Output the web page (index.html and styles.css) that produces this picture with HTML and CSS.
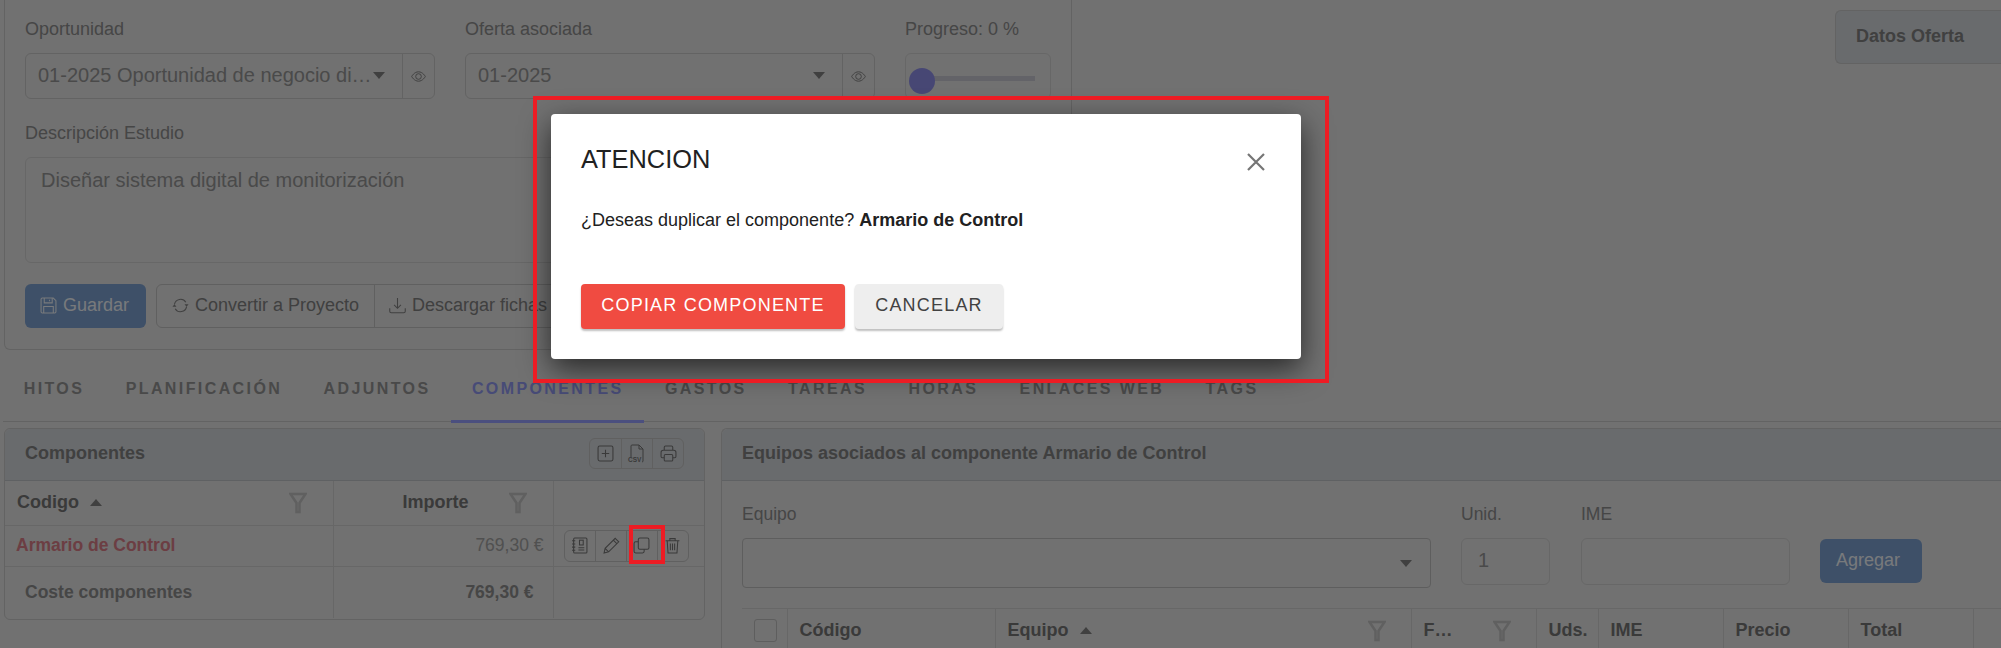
FILE: index.html
```html
<!DOCTYPE html>
<html lang="es">
<head>
    <meta charset="UTF-8">
    <meta name="viewport" content="width=device-width, initial-scale=1.0">
    <title>Estudio - Componentes</title>
    <link rel="stylesheet" href="styles.css">
</head>
<body>
    <svg class="sprites" width="0" height="0" aria-hidden="true">
        <symbol id="i-eye" viewBox="0 0 16 16"><path d="M.7 8S3.4 3 8 3s7.3 5 7.3 5-2.7 5-7.3 5S.7 8 .7 8z"/><circle cx="8" cy="8" r="3"/></symbol>
        <symbol id="i-save" viewBox="0 0 16 16"><path d="M1 2.2C1 1.5 1.5 1 2.2 1h10.3L15 3.5v10.3c0 .7-.5 1.2-1.2 1.2H2.2C1.5 15 1 14.500 1 13.800z"/><path d="M4 1v4.500h7.500V1M9 2.500v1.500M3.500 15V9h9v6"/></symbol>
        <symbol id="i-sync" viewBox="0 0 16 16"><path d="M2.300 7A5.800 5.800 0 0 1 13 5M13.700 9A5.800 5.800 0 0 1 3 11"/><path class="solid" d="M.4 9.200h3.800L2.300 6.900zM11.800 6.800h3.800l-1.900 2.300z"/></symbol>
        <symbol id="i-down" viewBox="0 0 16 16"><path d="M8 1v9.500M4.800 7.500 8 10.700l3.200-3.200M.7 10.500v3c0 .8.600 1.400 1.400 1.400h11.800c.8 0 1.400-.6 1.400-1.400v-3"/></symbol>
        <symbol id="i-plus" viewBox="0 0 16 16"><rect x="1" y="1" width="14" height="14" rx="1.500"/><path d="M8 4.500v7M4.500 8h7"/></symbol>
        <symbol id="i-print" viewBox="0 0 16 16"><path d="M4 5V2.200C4 1.500 4.500 1 5.200 1h5.600c.7 0 1.200.5 1.200 1.200V5M4 12H2.200C1.500 12 1 11.500 1 10.800V7c0-1.100.9-2 2-2h10c1.100 0 2 .9 2 2v3.800c0 .7-.5 1.200-1.200 1.200H12"/><rect x="4" y="9" width="8" height="6" rx="1"/></symbol>
        <symbol id="i-book" viewBox="0 0 16 16"><rect x="2.500" y="1" width="12.500" height="14" rx="1"/><path d="M1 3.500h3M1 6.500h3M1 9.500h3M1 12.500h3M7 12.300h5.500M7 10.200h5.500"/><rect x="8" y="3" width="3.500" height="4.500"/></symbol>
        <symbol id="i-pencil" viewBox="0 0 16 16"><path d="M11.500 1.200 14.800 4.500 5.300 14 1 15l1-4.300zM9.700 3l3.300 3.300M2 10.700 5.300 14"/></symbol>
        <symbol id="i-copy" viewBox="0 0 16 16"><rect x="5" y="1" width="10" height="10.500" rx="1.500"/><path d="M5 4.500H2.500C1.700 4.500 1 5.200 1 6v7.500c0 .8.700 1.500 1.500 1.500h6.500c.8 0 1.500-.7 1.500-1.500v-2"/></symbol>
        <symbol id="i-trash" viewBox="0 0 16 16"><path d="M1.500 3.500h13M5.500 3.500V1.500h5v2M3 3.500l.8 11.500h8.400L13 3.500M6 6v6.500M8 6v6.500M10 6v6.500"/></symbol>
        <symbol id="i-funnel" viewBox="0 0 18 22"><path d="M1.500 2h15L10.500 11v9h-3v-9z"/></symbol>
    </svg>

    <div class="page">
        <div class="top-row">
            <section class="study-card">
                <div class="fields">
                    <div class="field field-wide">
                        <label class="lbl">Oportunidad</label>
                        <div class="select-eye">
                            <div class="select-value">01-2025 Oportunidad de negocio di…<span class="caret"></span></div>
                            <div class="eye-cell"><svg class="ico ico-eye"><use href="#i-eye"/></svg></div>
                        </div>
                    </div>
                    <div class="field field-wide">
                        <label class="lbl">Oferta asociada</label>
                        <div class="select-eye">
                            <div class="select-value select-spread">01-2025<span class="caret"></span></div>
                            <div class="eye-cell"><svg class="ico ico-eye"><use href="#i-eye"/></svg></div>
                        </div>
                    </div>
                    <div class="field field-progress">
                        <label class="lbl">Progreso: 0 %</label>
                        <div class="slider-box">
                            <span class="thumb"></span>
                            <span class="track"></span>
                        </div>
                    </div>
                </div>
                <label class="lbl lbl-desc">Descripción Estudio</label>
                <div class="desc-box">Diseñar sistema digital de monitorización</div>
                <div class="actions">
                    <button class="btn btn-primary"><svg class="ico"><use href="#i-save"/></svg>Guardar</button>
                    <div class="btn-group">
                        <button class="btn"><svg class="ico"><use href="#i-sync"/></svg>Convertir a Proyecto</button>
                        <button class="btn"><svg class="ico"><use href="#i-down"/></svg>Descargar fichas</button>
                    </div>
                </div>
            </section>
            <div class="side-tab">Datos Oferta</div>
        </div>

        <nav class="tabs">
            <a class="tab">HITOS</a>
            <a class="tab">PLANIFICACIÓN</a>
            <a class="tab">ADJUNTOS</a>
            <a class="tab active">COMPONENTES</a>
            <a class="tab">GASTOS</a>
            <a class="tab">TAREAS</a>
            <a class="tab">HORAS</a>
            <a class="tab">ENLACES WEB</a>
            <a class="tab">TAGS</a>
        </nav>

        <div class="bottom-row">
            <section class="card card-left">
                <header class="card-head">
                    <span>Componentes</span>
                    <div class="tool-group">
                        <span class="tool"><svg class="ico"><use href="#i-plus"/></svg></span>
                        <span class="tool tool-csv">
                            <svg viewBox="0 0 16 20" class="ico-csv"><path d="M2 13V2c0-.6.4-1 1-1h7l4 4v12c0 .6-.4 1-1 1"/><path d="M10 1v4h4"/></svg>
                            <b class="csv-text">CSV</b>
                        </span>
                        <span class="tool"><svg class="ico"><use href="#i-print"/></svg></span>
                    </div>
                </header>
                <table class="grid grid-left">
                    <colgroup><col class="c-code"><col class="c-imp"><col></colgroup>
                    <thead>
                        <tr>
                            <th><div class="th-in"><span>Codigo</span><span class="sort"></span><svg class="funnel"><use href="#i-funnel"/></svg></div></th>
                            <th><div class="th-in th-center"><span>Importe</span><svg class="funnel"><use href="#i-funnel"/></svg></div></th>
                            <th></th>
                        </tr>
                    </thead>
                    <tbody>
                        <tr class="row">
                            <td class="code-link">Armario de Control</td>
                            <td class="num">769,30 €</td>
                            <td class="td-acts">
                                <div class="row-acts">
                                    <span class="tool"><svg class="ico"><use href="#i-book"/></svg></span>
                                    <span class="tool"><svg class="ico"><use href="#i-pencil"/></svg></span>
                                    <span class="tool"><svg class="ico"><use href="#i-copy"/></svg></span>
                                    <span class="tool"><svg class="ico"><use href="#i-trash"/></svg></span>
                                </div>
                            </td>
                        </tr>
                        <tr class="total">
                            <td class="total-label">Coste componentes</td>
                            <td class="total-num">769,30 €</td>
                            <td></td>
                        </tr>
                    </tbody>
                </table>
            </section>

            <section class="card card-right">
                <header class="card-head">
                    <span>Equipos asociados al componente Armario de Control</span>
                </header>
                <div class="card-body">
                    <div class="form-row">
                        <div class="f-equipo">
                            <label class="lbl lbl-sm">Equipo</label>
                            <div class="equipo-select"><span class="caret"></span></div>
                        </div>
                        <div class="f-unid">
                            <label class="lbl lbl-sm">Unid.</label>
                            <div class="text-box">1</div>
                        </div>
                        <div class="f-ime">
                            <label class="lbl lbl-sm">IME</label>
                            <div class="text-box"></div>
                        </div>
                        <button class="btn btn-primary btn-add">Agregar</button>
                    </div>
                    <table class="grid grid-right">
                        <colgroup>
                            <col class="r-check"><col class="r-cod"><col class="r-eq"><col class="r-f"><col class="r-uds"><col class="r-m"><col class="r-m"><col class="r-m"><col>
                        </colgroup>
                        <thead>
                            <tr>
                                <th class="th-check"><span class="check"></span></th>
                                <th>Código</th>
                                <th><div class="th-in"><span>Equipo</span><span class="sort"></span><svg class="funnel"><use href="#i-funnel"/></svg></div></th>
                                <th><div class="th-in"><span>F…</span><svg class="funnel"><use href="#i-funnel"/></svg></div></th>
                                <th>Uds.</th>
                                <th>IME</th>
                                <th>Precio</th>
                                <th>Total</th>
                                <th></th>
                            </tr>
                        </thead>
                    </table>
                </div>
            </section>
        </div>
    </div>

    <div class="overlay"></div>

    <div class="modal">
        <div class="modal-head">
            <h2>ATENCION</h2>
            <svg class="close" viewBox="0 0 22 22"><path d="M3 3l16 16M19 3 3 19"/></svg>
        </div>
        <p class="modal-text">¿Deseas duplicar el componente? <b>Armario de Control</b></p>
        <div class="modal-actions">
            <button class="mbtn mbtn-red">COPIAR COMPONENTE</button>
            <button class="mbtn mbtn-grey">CANCELAR</button>
        </div>
    </div>

    <div class="mark mark-modal"></div>
    <div class="mark mark-copy"></div>
</body>
</html>
```

FILE: styles.css
```css
* {
    box-sizing: border-box;
}
html, body {
    margin: 0;
    height: 648px;
    overflow: hidden;
}
body {
    font-family: "Liberation Sans", Arial, sans-serif;
    background: #e2e2e2;
    color: #949494;
    position: relative;
}
.sprites {
    position: absolute;
}
.page {
    width: 2001px;
    height: 648px;
    overflow: hidden;
}

/* icons */
.ico {
    width: 17px;
    height: 17px;
    fill: none;
    stroke: currentColor;
    stroke-width: 1;
    flex: none;
}
.ico .solid, symbol .solid {
    fill: currentColor;
    stroke: none;
}
.ico-eye {
    width: 15px;
    height: 15px;
}

/* top part */
.top-row {
    display: flex;
    height: 350px;
}
.study-card {
    width: 1068px;
    height: 350px;
    margin-left: 4px;
    padding: 18px 20px 0;
    border: 1px solid #c6c6c6;
    border-top: 0;
    border-radius: 0 0 6px 6px;
}
.fields {
    display: flex;
    gap: 30px;
}
.field-wide {
    width: 410px;
}
.field-progress {
    width: 146px;
}
.lbl {
    display: block;
    font-size: 18px;
    line-height: 22px;
    margin-bottom: 13px;
    color: #8c8c8c;
}
.select-eye {
    display: flex;
    height: 46px;
    border: 1px solid #c6c6c6;
    border-radius: 6px;
}
.select-value {
    flex: 1;
    display: flex;
    align-items: center;
    padding: 0 0 2px 12px;
    font-size: 20px;
    color: #949494;
    white-space: nowrap;
}
.select-spread {
    justify-content: space-between;
    padding-right: 17px;
}
.caret {
    width: 0;
    height: 0;
    margin-left: 1px;
    border-left: 6px solid transparent;
    border-right: 6px solid transparent;
    border-top: 7px solid #808080;
}
.eye-cell {
    width: 32px;
    display: flex;
    align-items: center;
    justify-content: center;
    border-left: 1px solid #c6c6c6;
    color: #7c7c7c;
}
.slider-box {
    position: relative;
    height: 46px;
    border: 1px solid #cfcfcf;
    border-radius: 6px;
}
.thumb {
    position: absolute;
    left: 3px;
    top: 14px;
    width: 26px;
    height: 26px;
    border-radius: 50%;
    background: #8e8ee8;
}
.track {
    display: block;
    margin: 22px 15px 0 28px;
    height: 5px;
    background: #c6c6d0;
}
.lbl-desc {
    margin-top: 23px;
}
.desc-box {
    width: 1026px;
    height: 106px;
    padding: 10px 15px;
    font-size: 20px;
    line-height: 24px;
    color: #949494;
    border: 1px solid #cfcfcf;
    border-radius: 6px;
}
.actions {
    display: flex;
    gap: 10px;
    margin-top: 21px;
}
.btn {
    display: inline-flex;
    align-items: center;
    gap: 6px;
    height: 44px;
    padding: 0 14px 2px;
    font-family: inherit;
    font-size: 18px;
    color: #808080;
    background: transparent;
    border: 0;
}
.btn-primary {
    width: 121px;
    padding-left: 15px;
    background: #7ca0d0;
    color: #f0f4f8;
    border-radius: 6px;
}
.btn-group {
    display: flex;
    height: 44px;
    width: 480px;
    border: 1px solid #c0c0c0;
    border-radius: 6px;
}
.btn-group .btn {
    height: 42px;
}
.btn-group .btn:first-child {
    width: 218px;
    padding-left: 15px;
    border-right: 1px solid #c0c0c0;
}
.side-tab {
    margin: 10px 0 0 auto;
    width: 166px;
    height: 54px;
    padding-left: 20px;
    line-height: 50px;
    font-size: 18px;
    font-weight: bold;
    color: #808080;
    background: #d2d6da;
    border: 1px solid #c6c6c6;
    border-right: 0;
    border-radius: 6px 0 0 6px;
}

/* tabs */
.tabs {
    display: flex;
    height: 72px;
    margin-left: 3px;
    border-bottom: 1px solid #c6c6c6;
}
.tab {
    display: flex;
    align-items: center;
    padding: 5px 20.7px 0;
    height: 73px;
    font-size: 16px;
    font-weight: bold;
    letter-spacing: 2.4px;
    color: #929292;
}
.tab.active {
    color: #8e96ee;
    border-bottom: 3px solid #969eff;
    padding-top: 8px;
}

/* bottom part */
.bottom-row {
    display: flex;
    gap: 16px;
    margin-top: 6px;
    margin-left: 4px;
    align-items: flex-start;
}
.card {
    border: 1px solid #c6c6c6;
    border-radius: 6px;
}
.card-left {
    flex: none;
    width: 701px;
    height: 192px;
}
.card-right {
    flex: none;
    width: 1300px;
    height: 240px;
    border-right: 0;
}
.card-head {
    display: flex;
    align-items: center;
    justify-content: space-between;
    height: 52px;
    padding: 0 20px 2px;
    font-size: 18px;
    font-weight: bold;
    color: #808080;
    background: #d2d6da;
    border-bottom: 1px solid #bfc3c7;
    border-radius: 6px 6px 0 0;
}
.tool-group, .row-acts {
    display: flex;
    height: 31px;
    border: 1px solid #c0c0c0;
    border-radius: 6px;
    color: #747474;
}
.tool {
    position: relative;
    width: 31px;
    display: flex;
    align-items: center;
    justify-content: center;
    border-left: 1px solid #c0c0c0;
}
.tool:first-child {
    border-left: 0;
}
.ico-csv {
    width: 16px;
    height: 20px;
    fill: none;
    stroke: currentColor;
    stroke-width: 1;
}
.csv-text {
    position: absolute;
    left: 6px;
    top: 17px;
    font-size: 6.5px;
    line-height: 7px;
}

/* tables */
.grid {
    border-collapse: collapse;
    table-layout: fixed;
    font-size: 18px;
}
.grid-left {
    width: 699px;
}
.c-code {
    width: 328px;
}
.c-imp {
    width: 220px;
}
.grid th {
    height: 44px;
    padding: 0 12px;
    font-weight: bold;
    color: #747474;
    text-align: left;
    border-right: 1px solid #cfcfcf;
    border-bottom: 1px solid #cfcfcf;
}
.grid th:last-child, .grid td:last-child {
    border-right: 0;
}
.grid td {
    padding: 0;
    font-size: 17.5px;
    border-right: 1px solid #cfcfcf;
}
.th-in {
    display: flex;
    align-items: center;
}
.th-center {
    padding-left: 57px;
}
.sort {
    width: 0;
    height: 0;
    margin-left: 11px;
    border-left: 6px solid transparent;
    border-right: 6px solid transparent;
    border-bottom: 7px solid #808080;
}
.funnel {
    width: 18px;
    height: 22px;
    margin-left: auto;
    margin-right: 13.500px;
    fill: none;
    stroke: #c0c0c0;
    stroke-width: 2.5;
}
.row td {
    height: 41px;
    border-bottom: 1px solid #cfcfcf;
}
.code-link {
    padding-left: 11px !important;
    font-weight: bold;
    color: #d87c86;
}
.num {
    text-align: right;
    padding-right: 9px !important;
    color: #a0a0a0;
}
.td-acts {
    padding-left: 10px !important;
}
.row-acts {
    width: 125px;
    height: 32px;
}
.row-acts .tool {
    width: 31.500px;
}
.total td {
    height: 52px;
    font-weight: bold;
    color: #8c8c8c;
}
.total-label {
    padding-left: 20px !important;
}
.total-num {
    text-align: right;
    padding-right: 19px !important;
}
.card-body {
    padding: 22px 20px 0;
}
.form-row {
    display: flex;
    align-items: flex-start;
}
.lbl-sm {
    margin-bottom: 13px;
    font-size: 17.5px;
}
.f-equipo {
    width: 689px;
}
.f-unid {
    width: 89px;
    margin-left: 30px;
}
.f-ime {
    width: 209px;
    margin-left: 31px;
}
.equipo-select {
    display: flex;
    align-items: center;
    justify-content: flex-end;
    height: 50px;
    padding-right: 18px;
    border: 1px solid #bcbcbc;
    border-radius: 4px;
}
.text-box {
    height: 47px;
    padding-left: 16px;
    font-size: 20px;
    line-height: 43px;
    color: #949494;
    border: 1px solid #cfcfcf;
    border-radius: 6px;
}
.btn-add {
    width: 102px;
    margin: 36px 0 0 30px;
    padding-left: 16px;
}
.grid-right {
    width: 1300px;
    margin-top: 20px;
    border-top: 1px solid #cfcfcf;
}
.r-check {
    width: 45px;
}
.r-cod {
    width: 208px;
}
.r-eq {
    width: 416px;
}
.r-f {
    width: 125px;
}
.r-uds {
    width: 62px;
}
.r-m {
    width: 125px;
}
.grid-right th {
    padding: 0 0 0 12px;
}
.grid-right .funnel {
    margin-right: 25px;
}
.th-check {
    padding-left: 12px !important;
}
.check {
    display: block;
    width: 23px;
    height: 23px;
    border: 1px solid #bcbcbc;
    border-radius: 3px;
}

/* dialog */
.overlay {
    position: absolute;
    inset: 0;
    background: rgba(0, 0, 0, 0.5);
}
.modal {
    position: absolute;
    left: 551px;
    top: 114px;
    width: 750px;
    height: 245px;
    padding: 29px 30px 0;
    background: #fff;
    border-radius: 4px;
    box-shadow: 0 10px 30px rgba(0, 0, 0, 0.65);
    color: #212121;
}
.modal-head {
    display: flex;
    justify-content: space-between;
    align-items: center;
    height: 32px;
}
.modal-head h2 {
    margin: 0;
    font-size: 25.4px;
    line-height: 32px;
    font-weight: 400;
}
.close {
    width: 22px;
    height: 22px;
    margin: 6px 4px 0 0;
    fill: none;
    stroke: #757575;
    stroke-width: 2.200;
}
.modal-text {
    margin: 33px 0 0;
    font-size: 18px;
    line-height: 24px;
}
.modal-actions {
    display: flex;
    gap: 10px;
    margin-top: 52px;
}
.mbtn {
    height: 45px;
    padding: 0 0 2px;
    font-family: inherit;
    font-size: 18px;
    letter-spacing: 1.200px;
    border: 0;
    border-radius: 4px;
    box-shadow: 0 2px 2px rgba(0, 0, 0, 0.25);
}
.mbtn-red {
    width: 264px;
    color: #fff;
    background: #f04b41;
}
.mbtn-grey {
    width: 148px;
    color: #424242;
    background: #eeeeee;
}

/* red marks drawn on top of the capture */
.mark {
    position: absolute;
    border: 4px solid #ed1c24;
}
.mark-modal {
    left: 533px;
    top: 96px;
    width: 796px;
    height: 287px;
}
.mark-copy {
    left: 629px;
    top: 525px;
    width: 36px;
    height: 39px;
}
```
